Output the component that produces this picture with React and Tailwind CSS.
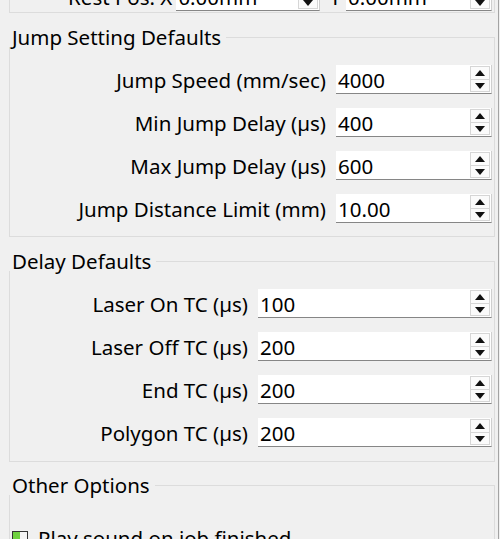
import React from "react";

const FONT = "font-['Segoe_UI','Noto_Sans',sans-serif]";

function Arrow({ up }) {
  return (
    <svg width="10" height="6" viewBox="0 0 10 6" className="block">
      {up ? <path d="M5 0L10 6H0Z" fill="#111" /> : <path d="M0 0H10L5 6Z" fill="#111" />}
    </svg>
  );
}

function SpinBox({ value }) {
  return (
    <div className="flex h-[29px] items-stretch border-b border-r border-[#868686] border-r-[#cfcfcf] bg-white">
      <div className="flex-1 pl-[2px] pt-px text-[20.5px] leading-[28px]">{value}</div>
      <div className="flex w-[21px] flex-col pt-px pb-px pr-px">
        <div className="flex h-[14px] items-center justify-center border border-[#d6d6d6] bg-[#fbfbfb]">
          <Arrow up />
        </div>
        <div className="flex h-[12px] items-center justify-center border border-t-0 border-[#d6d6d6] bg-[#fbfbfb]">
          <Arrow />
        </div>
      </div>
    </div>
  );
}

function GroupTitle({ children }) {
  return (
    <div className="-ml-px -mt-[11px] w-fit bg-[#f0f0f0] pl-[3px] pr-[5px] text-[20.5px] leading-[20px]">
      {children}
    </div>
  );
}

function FormGroup({ title, rows, inputWidth, className = "" }) {
  return (
    <div className={`border border-[#dcdcdc] pr-[2px] ${className}`}>
      <GroupTitle>{title}</GroupTitle>
      <div
        className="mt-[18px] grid gap-x-[10px] gap-y-[14px]"
        style={{ gridTemplateColumns: `1fr ${inputWidth}px` }}
      >
        {rows.map(([label, value]) => (
          <React.Fragment key={label}>
            <div className="h-[29px] whitespace-nowrap pt-px text-right text-[20.5px] leading-[28px]">{label}</div>
            <SpinBox value={value} />
          </React.Fragment>
        ))}
      </div>
    </div>
  );
}

export default function App() {
  return (
    <div className={`flex h-[539px] w-[500px] overflow-hidden bg-[#f0f0f0] text-black ${FONT}`}>
      <div className="w-[498px] pl-[9px] pr-[3px]">
        {/* Rest position group, scrolled mostly out of view */}
        <div className="flex h-[13px] flex-col justify-end border-x border-b border-[#dcdcdc] pb-px">
          <div className="flex items-stretch pr-[2px]">
            <div className="h-[29px] flex-1 whitespace-nowrap pr-[4px] pt-px text-right text-[20.5px] leading-[28px]">Rest Pos. X</div>
            <div className="w-[144px]">
              <SpinBox value="0.00mm" />
            </div>
            <div className="h-[29px] pl-[9px] pr-[5px] pt-px text-[20.5px] leading-[28px]">Y</div>
            <div className="w-[146px]">
              <SpinBox value="0.00mm" />
            </div>
          </div>
        </div>

        <FormGroup
          className="mt-[24px] pb-[13px]"
          title="Jump Setting Defaults"
          inputWidth={156}
          rows={[
            ["Jump Speed (mm/sec)", "4000"],
            ["Min Jump Delay (µs)", "400"],
            ["Max Jump Delay (µs)", "600"],
            ["Jump Distance Limit (mm)", "10.00"],
          ]}
        />

        <FormGroup
          className="mt-[24px] pb-[14px]"
          title="Delay Defaults"
          inputWidth={234}
          rows={[
            ["Laser On TC (µs)", "100"],
            ["Laser Off TC (µs)", "200"],
            ["End TC (µs)", "200"],
            ["Polygon TC (µs)", "200"],
          ]}
        />

        <div className="mt-[23px] h-[80px] border-x border-t border-[#dcdcdc]">
          <GroupTitle>Other Options</GroupTitle>
          <div className="mt-[36px] flex items-start pl-[2px]">
            <div className="flex h-[16px] w-[16px] border border-[#333]">
              <div className="w-[7px] bg-[#6fd13f]" />
              <div className="flex-1 bg-[#f4f4f4]" />
            </div>
            <div className="-mt-[5px] whitespace-nowrap pl-[10px] text-[20.5px] leading-[24px]">Play sound on job finished</div>
          </div>
        </div>
      </div>
      <div className="w-px bg-[#a3a3a3]" />
      <div className="w-px bg-[#f0f0f0]" />
    </div>
  );
}
